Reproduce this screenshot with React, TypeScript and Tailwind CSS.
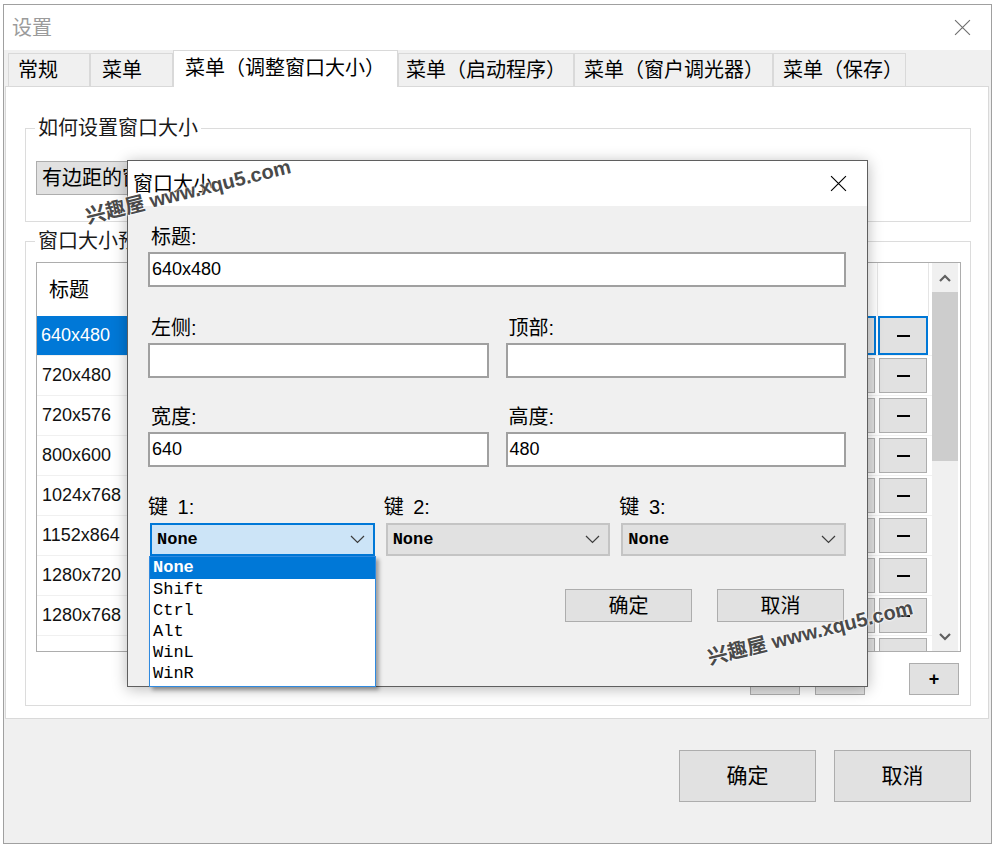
import React from 'react';

/* ── Icons ─────────────────────────────────────────── */
function XIcon({ size, color }: { size: number; color: string }) {
  return (
    <svg width={size} height={size} viewBox="0 0 16 16" fill="none">
      <path d="M1 1L15 15M15 1L1 15" stroke={color} strokeWidth="1.1" />
    </svg>
  );
}

function ChevronDown() {
  return (
    <svg width="15" height="9" viewBox="0 0 15 9" fill="none">
      <polyline points="1,1 7.5,7.5 14,1" stroke="#3c3c3c" strokeWidth="1.2" />
    </svg>
  );
}

function ScrollArrow({ up }: { up?: boolean }) {
  return (
    <svg width="12" height="8" viewBox="0 0 12 8" fill="none">
      <polyline
        points={up ? '1,7 6,2 11,7' : '1,1 6,6 11,1'}
        stroke="#606060"
        strokeWidth="2.2"
      />
    </svg>
  );
}

/* ── Pieces ────────────────────────────────────────── */
function GroupBox({ label, className, children }: {
  label: string; className: string; children: React.ReactNode;
}) {
  return (
    <div className={`relative border border-[#dcdcdc] ${className}`}>
      <span className="absolute left-[9px] -top-[14px] bg-white px-[3px] text-[20px] leading-[26px] text-[#1a1a1a]">
        {label}
      </span>
      {children}
    </div>
  );
}

function WinButton({ label, className }: { label: string; className: string }) {
  return (
    <div className={`bg-[#e1e1e1] border border-[#adadad] flex items-center justify-center ${className}`}>
      {label}
    </div>
  );
}

function FieldLabel({ children }: { children: React.ReactNode }) {
  return <div className="text-[20px] leading-[24px] pl-[3px]">{children}</div>;
}

function TextBox({ value = '' }: { value?: string }) {
  return (
    <div className="mt-[3px] h-[35px] bg-white border-2 border-[#a0a0a0] flex items-center pl-[2px] text-[18px]">
      {value}
    </div>
  );
}

function Combo({ focused }: { focused?: boolean }) {
  return (
    <div
      className={
        focused
          ? 'mt-[4px] h-[33px] bg-[#cce4f7] border-2 border-[#0078d7] flex items-center justify-between pl-[5px] pr-[8px]'
          : 'mt-[4px] h-[33px] bg-[#e1e1e1] border-2 border-[#c4c4c4] flex items-center justify-between pl-[5px] pr-[8px]'
      }
    >
      <span className="font-['Liberation_Mono',monospace] font-bold text-[17px] leading-[20px]">None</span>
      <ChevronDown />
    </div>
  );
}

// last entry is the row that is only partly scrolled into view
const rows = ['640x480', '720x480', '720x576', '800x600', '1024x768', '1152x864', '1280x720', '1280x768', ''];

const tabs = [
  { label: '常规', w: 'w-[82px] pl-[9px]' },
  { label: '菜单', w: 'w-[83px] pl-[11px]' },
  { label: '菜单（调整窗口大小）', w: 'w-[225px] pl-[11px]', active: true },
  { label: '菜单（启动程序）', w: 'w-[176px] pl-[7px]' },
  { label: '菜单（窗户调光器）', w: 'w-[199px] pl-[9px]' },
  { label: '菜单（保存）', w: 'w-[133px] pl-[9px]' },
];

/* ── Preset list ───────────────────────────────────── */
function PresetList() {
  return (
    <div className="ml-[10px] mt-[20px] w-[925px] h-[390px] border border-[#adadad] bg-white flex overflow-hidden">
      <div className="flex-1 flex flex-col">
        {/* header */}
        <div className="h-[53px] flex shrink-0">
          <div className="flex-1 flex items-center pl-[12px] text-[20px]">标题</div>
          <div className="w-[52px] border-l border-[#e5e5e5]" />
          <div className="w-[52px] border-l border-r border-[#e5e5e5]" />
          <div className="w-[3px]" />
        </div>
        {rows.map((r, i) => {
          const sel = i === 0;
          return (
            <div key={i} className="h-[40px] flex shrink-0 border-b border-[#f0f0f0]">
              <div className={sel
                ? 'flex-1 flex items-center pl-[4px] text-[18px] bg-[#0078d7] text-white'
                : 'flex-1 flex items-center pl-[5px] text-[18px] text-[#111]'}
              >
                {r}
              </div>
              <div className="w-[52px] flex items-center justify-center">
                <div className={sel
                  ? 'w-[50px] h-[39px] bg-[#e1e1e1] border-2 border-[#0078d7]'
                  : 'w-[48px] h-[35px] bg-[#e1e1e1] border border-[#adadad]'} />
              </div>
              <div className="w-[52px] flex items-center justify-center">
                <div className={sel
                  ? 'w-[50px] h-[39px] bg-[#e1e1e1] border-2 border-[#0078d7] flex items-center justify-center'
                  : 'w-[48px] h-[35px] bg-[#e1e1e1] border border-[#adadad] flex items-center justify-center'}
                >
                  {r && <div className="w-[13px] h-[2px] bg-black" />}
                </div>
              </div>
              <div className="w-[3px]" />
            </div>
          );
        })}
      </div>
      {/* scrollbar */}
      <div className="w-[26px] mr-[2px] bg-[#f0f0f0] flex flex-col shrink-0">
        <div className="h-[29px] flex items-center justify-center"><ScrollArrow up /></div>
        <div className="h-[169px] bg-[#cdcdcd]" />
        <div className="flex-1" />
        <div className="h-[29px] flex items-center justify-center"><ScrollArrow /></div>
      </div>
    </div>
  );
}

/* ── Main settings window ──────────────────────────── */
function MainWindow() {
  return (
    <div className="w-[989px] h-[840px] border border-[#a0a0a0] bg-[#f0f0f0] flex flex-col">
      <div className="h-[45px] bg-white flex items-center justify-between pl-[8px] pr-[20px] shrink-0">
        <span className="text-[20px] leading-[26px] text-[#9b9b9b]">设置</span>
        <XIcon size={17} color="#707070" />
      </div>

      <div className="h-[36px] flex items-end pl-[4px] shrink-0">
        {tabs.map(t => (
          <div
            key={t.label}
            className={t.active
              ? `${t.w} h-[37px] -mb-[1px] relative z-10 bg-white border-l border-t border-r border-[#d9d9d9] flex items-center pb-[3px] text-[20px] whitespace-nowrap`
              : `${t.w} h-[33px] bg-[#f0f0f0] border-l border-t border-r border-[#d9d9d9] flex items-center text-[20px] whitespace-nowrap`}
          >
            {t.label}
          </div>
        ))}
      </div>

      <div className="ml-[1px] mr-[2px] h-[633px] shrink-0 bg-white border border-[#d9d9d9] pl-[19px] pr-[17px] pt-[41px]">
        <GroupBox label="如何设置窗口大小" className="h-[94px]">
          <div className="ml-[10px] mt-[32px] w-[330px] h-[34px] bg-[#e1e1e1] border border-[#adadad] flex items-center pl-[5px] text-[20px]">
            有边距的窗口大小
          </div>
        </GroupBox>

        <GroupBox label="窗口大小预设" className="mt-[19px] h-[465px]">
          <PresetList />
          <div className="mt-[11px] h-[32px] flex justify-end pr-[11px]">
            <WinButton label="↑" className="w-[50px] h-[32px] text-[16px]" />
            <WinButton label="↓" className="w-[50px] h-[32px] ml-[15px] text-[16px]" />
            <WinButton label="+" className="w-[50px] h-[32px] ml-[44px] text-[18px] font-bold" />
          </div>
        </GroupBox>
      </div>

      <div className="flex-1 flex justify-end items-start pt-[31px] pr-[20px] gap-[18px]">
        <WinButton label="确定" className="w-[137px] h-[52px] text-[21px]" />
        <WinButton label="取消" className="w-[137px] h-[52px] text-[21px]" />
      </div>
    </div>
  );
}

/* ── Dialog "窗口大小" ──────────────────────────────── */
function SizeDialog() {
  return (
    <div className="absolute left-[127px] top-[160px] w-[741px] h-[527px] border border-[#5f5f5f] bg-[#f0f0f0] shadow-[0_2px_14px_rgba(0,0,0,0.28)] flex flex-col">
      <div className="h-[45px] bg-white flex items-center justify-between pl-[5px] pr-[20px] shrink-0">
        <span className="text-[20px] leading-[26px]">窗口大小</span>
        <XIcon size={17} color="#000" />
      </div>

      <div className="pl-[20px] pr-[21px] pt-[19px]">
        <FieldLabel>标题:</FieldLabel>
        <TextBox value="640x480" />

        <div className="grid grid-cols-2 gap-x-[17px] mt-[29px]">
          <div>
            <FieldLabel>左侧:</FieldLabel>
            <TextBox />
          </div>
          <div>
            <FieldLabel>顶部:</FieldLabel>
            <TextBox />
          </div>
        </div>

        <div className="grid grid-cols-2 gap-x-[17px] mt-[27px]">
          <div>
            <FieldLabel>宽度:</FieldLabel>
            <TextBox value="640" />
          </div>
          <div>
            <FieldLabel>高度:</FieldLabel>
            <TextBox value="480" />
          </div>
        </div>

        <div className="grid grid-cols-3 gap-x-[11px] mt-[28px] pl-[2px]">
          {[1, 2, 3].map(n => (
            <div key={n}>
              <div className="text-[20px] leading-[24px] -ml-[2px]">
                键 <span className="ml-[4px]">{n}:</span>
              </div>
              <Combo focused={n === 1} />
            </div>
          ))}
        </div>

        <div className="mt-[33px] flex justify-end gap-[25px] pr-[2px]">
          <WinButton label="确定" className="w-[127px] h-[33px] text-[20px]" />
          <WinButton label="取消" className="w-[127px] h-[33px] text-[20px]" />
        </div>
      </div>
    </div>
  );
}

/* ── Open dropdown of key 1 ────────────────────────── */
function KeyDropdown() {
  const items = ['None', 'Shift', 'Ctrl', 'Alt', 'WinL', 'WinR'];
  return (
    <div className="absolute left-[149px] top-[556px] w-[227px] h-[131px] bg-white border border-[#2f8ae0] shadow-[3px_3px_4px_rgba(0,0,0,0.35)] font-['Liberation_Mono',monospace] text-[17px]">
      {items.map((it, i) => (
        <div
          key={it}
          className={i === 0
            ? 'h-[22px] leading-[22px] pl-[3px] bg-[#0078d7] text-white font-bold'
            : 'h-[21px] leading-[21px] pl-[3px] text-black'}
        >
          {it}
        </div>
      ))}
    </div>
  );
}

/* ── Site watermark ────────────────────────────────── */
function Watermark({ className }: { className: string }) {
  return (
    <div
      className={`absolute w-[214px] h-[28px] -rotate-[14deg] flex items-center whitespace-nowrap font-bold text-[20px] text-[#4a4a4a] [text-shadow:0_0_2px_#fff,0_0_3px_#fff] pointer-events-none ${className}`}
    >
      兴趣屋 www.xqu5.com
    </div>
  );
}

export default function App() {
  return (
    <div className="relative w-[995px] h-[847px] bg-white overflow-hidden pt-[4px] pl-[3px] font-['Liberation_Sans','Noto_Sans_CJK_SC',sans-serif] text-black">
      <MainWindow />
      <SizeDialog />
      <KeyDropdown />
      <Watermark className="left-[83px] top-[177px]" />
      <Watermark className="left-[705px] top-[618px]" />
    </div>
  );
}
